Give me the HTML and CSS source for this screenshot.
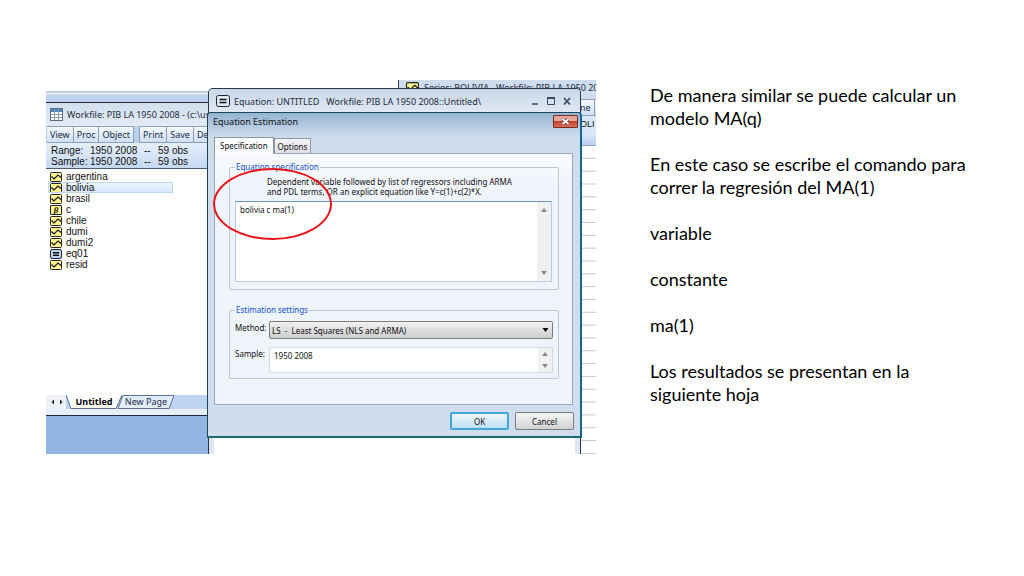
FILE: index.html
```html
<!DOCTYPE html>
<html lang="es">
<head>
    <meta charset="UTF-8">
    <meta name="viewport" content="width=device-width, initial-scale=1.0">
    <title>Modelo MA(q)</title>
    <link rel="stylesheet" href="styles.css">
</head>
<body>
    <!-- Shared icons -->
    <svg class="sprite" aria-hidden="true">
        <symbol id="series" viewBox="0 0 12 10">
            <rect x="0.5" y="0.5" width="11" height="9" rx="1" fill="#fdf58e" stroke="#222"/>
            <path d="M1.500 4.500l2.500 2.500 4-4 3 2.500" fill="none" stroke="#111" stroke-width="1.1"/>
        </symbol>
        <symbol id="equation" viewBox="0 0 12 10">
            <rect x="0.5" y="0.5" width="11" height="9" rx="1.5" fill="#b5d3f5" stroke="#223"/>
            <path d="M3 3.7h6M3 6.3h6" stroke="#111" stroke-width="1.4"/>
        </symbol>
        <symbol id="up" viewBox="0 0 6 4"><path d="M0 4l3-4 3 4z" fill="#888"/></symbol>
        <symbol id="down" viewBox="0 0 6 4"><path d="M0 0h6l-3 4z" fill="#888"/></symbol>
    </svg>

    <main class="slide">
        <div class="desktop">
            <div class="backdrop"></div>

            <!-- Workfile window -->
            <section class="window workfile">
                <header class="titlebar">
                    <svg class="table-icon" viewBox="0 0 13 13">
                        <rect x="0.5" y="0.5" width="12" height="12" fill="#fff" stroke="#5b6b80"/>
                        <path d="M1 1h11v3H1z" fill="#4d86b8"/>
                        <path d="M4.5 1v11M8.5 1v11M1 6.5h11M1 9.5h11" stroke="#8e9cae"/>
                    </svg>
                    <span>Workfile: PIB LA 1950 2008 - (c:\us</span>
                </header>
                <div class="toolbar">
                    <button>View</button><button>Proc</button><button>Object</button>
                    <button class="group">Print</button><button>Save</button><button>Deta</button>
                </div>
                <dl class="range">
                    <dt>Range:</dt><dd>1950 2008</dd><dd>--</dd><dd>59 obs</dd>
                    <dt>Sample:</dt><dd>1950 2008</dd><dd>--</dd><dd>59 obs</dd>
                </dl>
                <ul class="objects">
                    <li><svg><use href="#series"/></svg>argentina</li>
                    <li class="selected"><svg><use href="#series"/></svg>bolivia</li>
                    <li><svg><use href="#series"/></svg>brasil</li>
                    <li><span class="beta">&beta;</span>c</li>
                    <li><svg><use href="#series"/></svg>chile</li>
                    <li><svg><use href="#series"/></svg>dumi</li>
                    <li><svg><use href="#series"/></svg>dumi2</li>
                    <li><svg><use href="#equation"/></svg>eq01</li>
                    <li><svg><use href="#series"/></svg>resid</li>
                </ul>
                <nav class="pages">
                    <svg class="arrows" viewBox="0 0 18 14"><path d="M7 4.500L4.500 7 7 9.500zM13 4.500l2.500 2.500-2.500 2.500z" fill="#222"/></svg>
                    <a href="#untitled" class="page current">
                        <svg viewBox="0 0 56 14" preserveAspectRatio="none"><path d="M0 0l5 13.500h45l6-13.500" fill="#fff" stroke="#5a6f8c"/></svg>
                        <span>Untitled</span>
                    </a>
                    <a href="#new" class="page">
                        <svg viewBox="0 0 56 14" preserveAspectRatio="none"><path d="M0 13.500L5 .5h51l-5 13z" fill="#e3edfa" stroke="#5a6f8c"/></svg>
                        <span>New Page</span>
                    </a>
                </nav>
            </section>

            <!-- Series window -->
            <section class="window series">
                <header class="titlebar">
                    <svg class="series-icon"><use href="#series"/></svg>
                    <span>Series: BOLIVIA &nbsp; Workfile: PIB LA 1950 200</span>
                </header>
                <div class="toolbar"><button>me</button><button aria-label="More"></button></div>
                <div class="series-name">OLI</div>
                <div class="series-head"></div>
                <div class="sheet"></div>
            </section>

            <!-- Equation window -->
            <section class="window equation">
                <header class="titlebar">
                    <svg class="eq-icon" viewBox="0 0 14 12">
                        <rect x="0.500" y="0.500" width="13" height="11" rx="2" fill="#dfe8f4" stroke="#1a2533"/>
                        <path d="M3.500 4.500h7M3.500 7.500h7" stroke="#111" stroke-width="1.500"/>
                    </svg>
                    <span>Equation: UNTITLED &nbsp; Workfile: PIB LA 1950 2008::Untitled\</span>
                    <svg class="controls" viewBox="0 0 40 10">
                        <path d="M1 8h6" stroke="#3a4a66" stroke-width="1.500"/>
                        <path d="M16.500 2v6.500h7V2" fill="none" stroke="#3a4a66"/>
                        <path d="M16 2h8" stroke="#3a4a66" stroke-width="2"/>
                        <path d="M33 2l6 6.500M39 2l-6 6.500" stroke="#3a4a66" stroke-width="1.800"/>
                    </svg>
                </header>
                <div class="equation-body"></div>
            </section>

            <!-- Equation Estimation dialog -->
            <form class="dialog">
                <header class="dialog-title">
                    <span>Equation Estimation</span>
                    <button type="button" class="close" aria-label="Close">
                        <svg viewBox="0 0 9 7"><path d="M1.500 1l6 5M7.500 1l-6 5" stroke="#5c3030" stroke-width="3.200"/><path d="M1.500 1l6 5M7.500 1l-6 5" stroke="#fff" stroke-width="2"/></svg>
                    </button>
                </header>
                <div class="tabs">
                    <button type="button" class="tab active">Specification</button>
                    <button type="button" class="tab">Options</button>
                </div>
                <div class="panel">
                    <fieldset class="specification">
                        <legend>Equation specification</legend>
                        <label for="spec">Dependent variable followed by list of regressors including ARMA<br>and PDL terms, OR an explicit equation like Y=c(1)+c(2)*X.</label>
                        <div class="field">
                            <textarea id="spec">bolivia c ma(1)</textarea>
                            <div class="scroll"><svg><use href="#up"/></svg><svg><use href="#down"/></svg></div>
                        </div>
                    </fieldset>
                    <fieldset class="settings">
                        <legend>Estimation settings</legend>
                        <label for="method">Method:</label>
                        <div class="select">
                            <select id="method"><option>LS&nbsp; - &nbsp;Least Squares (NLS and ARMA)</option></select>
                            <svg viewBox="0 0 6 4"><path d="M0 0h6l-3 4z"/></svg>
                        </div>
                        <label for="sample">Sample:</label>
                        <div class="field">
                            <textarea id="sample">1950 2008</textarea>
                            <div class="scroll"><svg><use href="#up"/></svg><svg><use href="#down"/></svg></div>
                        </div>
                    </fieldset>
                </div>
                <div class="actions">
                    <button type="button" class="btn default">OK</button>
                    <button type="button" class="btn">Cancel</button>
                </div>
            </form>

            <div class="highlight"></div>
        </div>

        <div class="notes">
            <p>De manera similar se puede calcular un modelo MA(q)</p>
            <p>En este caso se escribe el comando para correr la regresión del MA(1)</p>
            <p>variable</p>
            <p>constante</p>
            <p>ma(1)</p>
            <p>Los resultados se presentan en la siguiente hoja</p>
        </div>
    </main>
</body>
</html>
```
FILE: styles.css
```css
* {
    box-sizing: border-box;
}
body {
    margin: 0;
    background-color: #fff;
    color: #111;
    font-family: "Noto Sans", sans-serif;
}
button, select, textarea {
    font-family: inherit;
    color: inherit;
    margin: 0;
}
.sprite {
    display: none;
}
.slide {
    display: grid;
    grid-template-columns: 550fr 320fr;
    gap: 54px;
    padding: 80px 54px 0 46px;
}

/* Desktop and windows */
.desktop {
    position: relative;
    height: 374px;
    overflow: hidden;
    font-size: 9px;
}
.backdrop {
    position: absolute;
    top: 11px;
    left: 0;
    right: 0;
    bottom: 0;
    background: linear-gradient(#b4c0cc 0, #eef3f9 3px, #bcd2f0 4px, #bcd2f0 11px, #92b5e4 11px);
}
.window {
    position: absolute;
    display: flex;
    flex-direction: column;
    overflow: hidden;
    white-space: nowrap;
}
.titlebar {
    display: flex;
    align-items: center;
    color: #222c3c;
}
.toolbar {
    display: flex;
    background-color: #b9cfec;
}
.toolbar button {
    height: 17px;
    padding: 0 3px;
    border: 1px solid #8b9fba;
    border-left-width: 0;
    background: linear-gradient(#f3f8fe, #cfdff3);
    color: #1c2c44;
    font-size: 9px;
    line-height: 15px;
}
.toolbar .group {
    margin-left: 5px;
    border-left-width: 1px;
}
.workfile {
    top: 22px;
    left: 0;
    width: 163px;
    height: 314px;
    border-top: 1px solid #1e2a3a;
    border-bottom: 1px solid #1e2a3a;
    background-color: #e3ebf7;
}
.workfile .titlebar {
    height: 23px;
    padding-left: 4px;
    gap: 4px;
    background: linear-gradient(#d3dfee, #e2eaf5);
}
.workfile .toolbar {
    padding-left: 1px;
}
.table-icon {
    flex: none;
    width: 13px;
    height: 13px;
}
.range {
    display: grid;
    grid-template-columns: 39px 54px 14px auto;
    align-content: center;
    height: 26px;
    margin: 0;
    padding-left: 5px;
    border-bottom: 1px solid #4a5a70;
    background: linear-gradient(#e6effb, #c5d8f2);
    font: 10px/11px "Liberation Sans", sans-serif;
}
.range dd {
    margin: 0;
}
.objects {
    flex: 1;
    display: grid;
    grid-template-rows: repeat(9, 11px);
    margin: 0;
    padding: 2px 0 0 2px;
    list-style: none;
    background-color: #fff;
    font: 10px/11px "Liberation Sans", sans-serif;
}
.objects li {
    display: flex;
    align-items: center;
    gap: 4px;
    width: 125px;
    padding-left: 2px;
}
.objects .selected {
    background: linear-gradient(#eff6fe, #d5e7fb);
    outline: 1px solid #bdd7f2;
    outline-offset: -1px;
}
.objects svg, .beta {
    width: 12px;
    height: 10px;
}
.beta {
    border: 1px solid #222;
    border-radius: 1px;
    background-color: #fdf58e;
    font: italic bold 9px/8px "Liberation Serif", serif;
    text-align: center;
}
.pages {
    display: flex;
    height: 20px;
    padding-bottom: 6px;
    background: linear-gradient(#bdd3f2 14px, #e6eefa 14px);
}
.arrows {
    width: 20px;
    height: 14px;
    background-color: #eef1f5;
}
.page {
    display: grid;
    width: 56px;
    color: #1c2c44;
    text-align: center;
    text-decoration: none;
    line-height: 14px;
}
.page + .page {
    margin-left: -4px;
}
.page svg, .page span {
    grid-area: 1 / 1;
    width: 100%;
    height: 14px;
}
.current {
    color: #000;
    font-weight: bold;
}

.series {
    top: 0;
    left: 352px;
    right: 0;
    bottom: 0;
    border-left: 1px solid #445;
    background-color: #fff;
}
.series .titlebar {
    height: 19px;
    padding: 0 0 4px 7px;
    gap: 5px;
    background-color: #cfdced;
}
.series-icon {
    flex: none;
    width: 13px;
    height: 11px;
}
.series .toolbar {
    padding-left: 175px;
}
.series-name {
    height: 17px;
    padding-left: 181px;
    background-color: #d9e6f7;
    font: 9px/17px "Liberation Sans", sans-serif;
}
.series-head {
    height: 13px;
    border-bottom: 1px solid #8fa3bd;
    background: linear-gradient(#dce9f9, #b9d0ef);
}
.sheet {
    flex: 1;
    background-image: linear-gradient(to top, #c3c7cc 1px, transparent 1px);
    background-size: 100% calc(100% / 24);
}

.equation {
    top: 8px;
    left: 162px;
    width: 373px;
    bottom: 0;
    border: 1px solid #2b3645;
    border-bottom: 0;
    border-radius: 5px 5px 0 0;
    background-color: #dce5f1;
}
.equation .titlebar {
    height: 24px;
    padding: 0 9px 0 7px;
    gap: 4px;
    background: linear-gradient(#cad7e8, #e1e9f4);
}
.eq-icon {
    flex: none;
    width: 14px;
    height: 12px;
}
.controls {
    width: 40px;
    height: 10px;
    margin-left: auto;
}
.equation-body {
    flex: 1;
    margin: 0 5px;
    background-color: #fff;
}

/* Dialog */
.dialog {
    position: absolute;
    top: 32px;
    left: 161px;
    width: 375px;
    padding: 0 7px 6px 6px;
    border: 1px solid #1d4658;
    border-right: 2px solid #17658c;
    border-bottom: 2px solid #1b6b70;
    border-radius: 4px 4px 0 0;
    background: linear-gradient(#94b4d4, #cfdcec 24px, #d0ddee);
    font-size: 8px;
}
.dialog-title {
    display: flex;
    align-items: flex-start;
    justify-content: space-between;
    height: 24px;
    margin: 0 -5px 0 -1px;
    padding-top: 2px;
    font-size: 9px;
    line-height: 14px;
}
.close {
    display: grid;
    place-items: center;
    width: 25px;
    height: 13px;
    padding: 0;
    border: 1px solid #7a2a25;
    border-radius: 1px;
    background: linear-gradient(#e4a69b 45%, #c2432f 50%, #d8705a);
}
.close svg {
    width: 9px;
    height: 7px;
}
.tabs {
    display: flex;
    align-items: flex-end;
}
.tab {
    height: 15px;
    padding: 0 3px;
    border: 1px solid #8c96a3;
    border-bottom: 0;
    background: linear-gradient(#f3f4f6, #dcdfe4);
    font-size: 8px;
    line-height: 13px;
}
.tab.active {
    height: 17px;
    margin-bottom: -1px;
    padding: 0 5px 2px;
    background: #fafcff;
    z-index: 1;
}
.panel {
    height: 252px;
    padding: 6px 13px 0 14px;
    border: 1px solid #9aa8ba;
    background: linear-gradient(#f8fafd, #eff3fa 40px);
}
fieldset {
    min-width: 0;
    margin: 0;
    padding: 0 6px 0 5px;
    border: 1px solid #bcc7d6;
    border-radius: 2px;
}
legend {
    padding: 0 1px;
    color: #1450c8;
    line-height: 14px;
}
.specification {
    height: 130px;
}
.specification label {
    display: block;
    padding: 3px 0 4px 32px;
    line-height: 10px;
}
.field {
    display: flex;
    border: 1px solid #d3dae4;
    background-color: #fff;
}
.specification .field {
    height: 81px;
    border-color: #6f95bd #b9cbe0 #b9cbe0;
}
.field textarea {
    flex: 1;
    min-width: 0;
    padding: 2px 4px;
    border: 0;
    outline: 0;
    resize: none;
    background: transparent;
    font-size: 8px;
    line-height: 11px;
}
.scroll {
    display: flex;
    flex-direction: column;
    align-items: center;
    justify-content: space-between;
    width: 14px;
    padding: 6px 0;
    background-color: #f0f0f0;
}
.scroll svg {
    width: 6px;
    height: 4px;
}
.settings {
    display: grid;
    grid-template-columns: 34px 1fr;
    row-gap: 8px;
    height: 76px;
    margin-top: 13px;
    padding-top: 4px;
    align-content: start;
}
.settings label {
    line-height: 14px;
}
.settings .field, .select {
    margin-right: -1px;
}
.select {
    display: grid;
    align-items: center;
}
.select select, .select svg {
    grid-area: 1 / 1;
}
.select select {
    appearance: none;
    width: 100%;
    height: 18px;
    padding: 0 2px;
    border: 1px solid #7c7c7c;
    border-radius: 2px;
    background: linear-gradient(#f2f2f2, #dedede 50%, #cfcfcf);
    font-size: 8px;
}
.select svg {
    justify-self: end;
    width: 7px;
    height: 4px;
    margin-right: 4px;
    pointer-events: none;
}
.settings .field {
    height: 26px;
}
.settings .scroll {
    padding: 4px 0;
}
.actions {
    display: flex;
    justify-content: flex-end;
    gap: 6px;
    margin-right: -1px;
    padding-top: 7px;
}
.btn {
    width: 59px;
    height: 18px;
    padding: 0;
    border: 1px solid #7c7c7c;
    border-radius: 2px;
    background: linear-gradient(#f4f4f4, #e4e4e4 50%, #d2d2d2);
    font-size: 8px;
}
.default {
    border: 2px solid #3fa9dc;
    background: linear-gradient(#eef8fd, #d6e9f5 50%, #bfe0f2);
}
.highlight {
    position: absolute;
    top: 88px;
    left: 167px;
    width: 119px;
    height: 72px;
    border: 2px solid #e8141a;
    border-radius: 50%;
    pointer-events: none;
}

/* Slide text */
.notes {
    padding-top: 4px;
    color: #000;
    font: 18px/23px Lato, sans-serif;
}
.notes p {
    margin: 0 0 23px;
}
```
